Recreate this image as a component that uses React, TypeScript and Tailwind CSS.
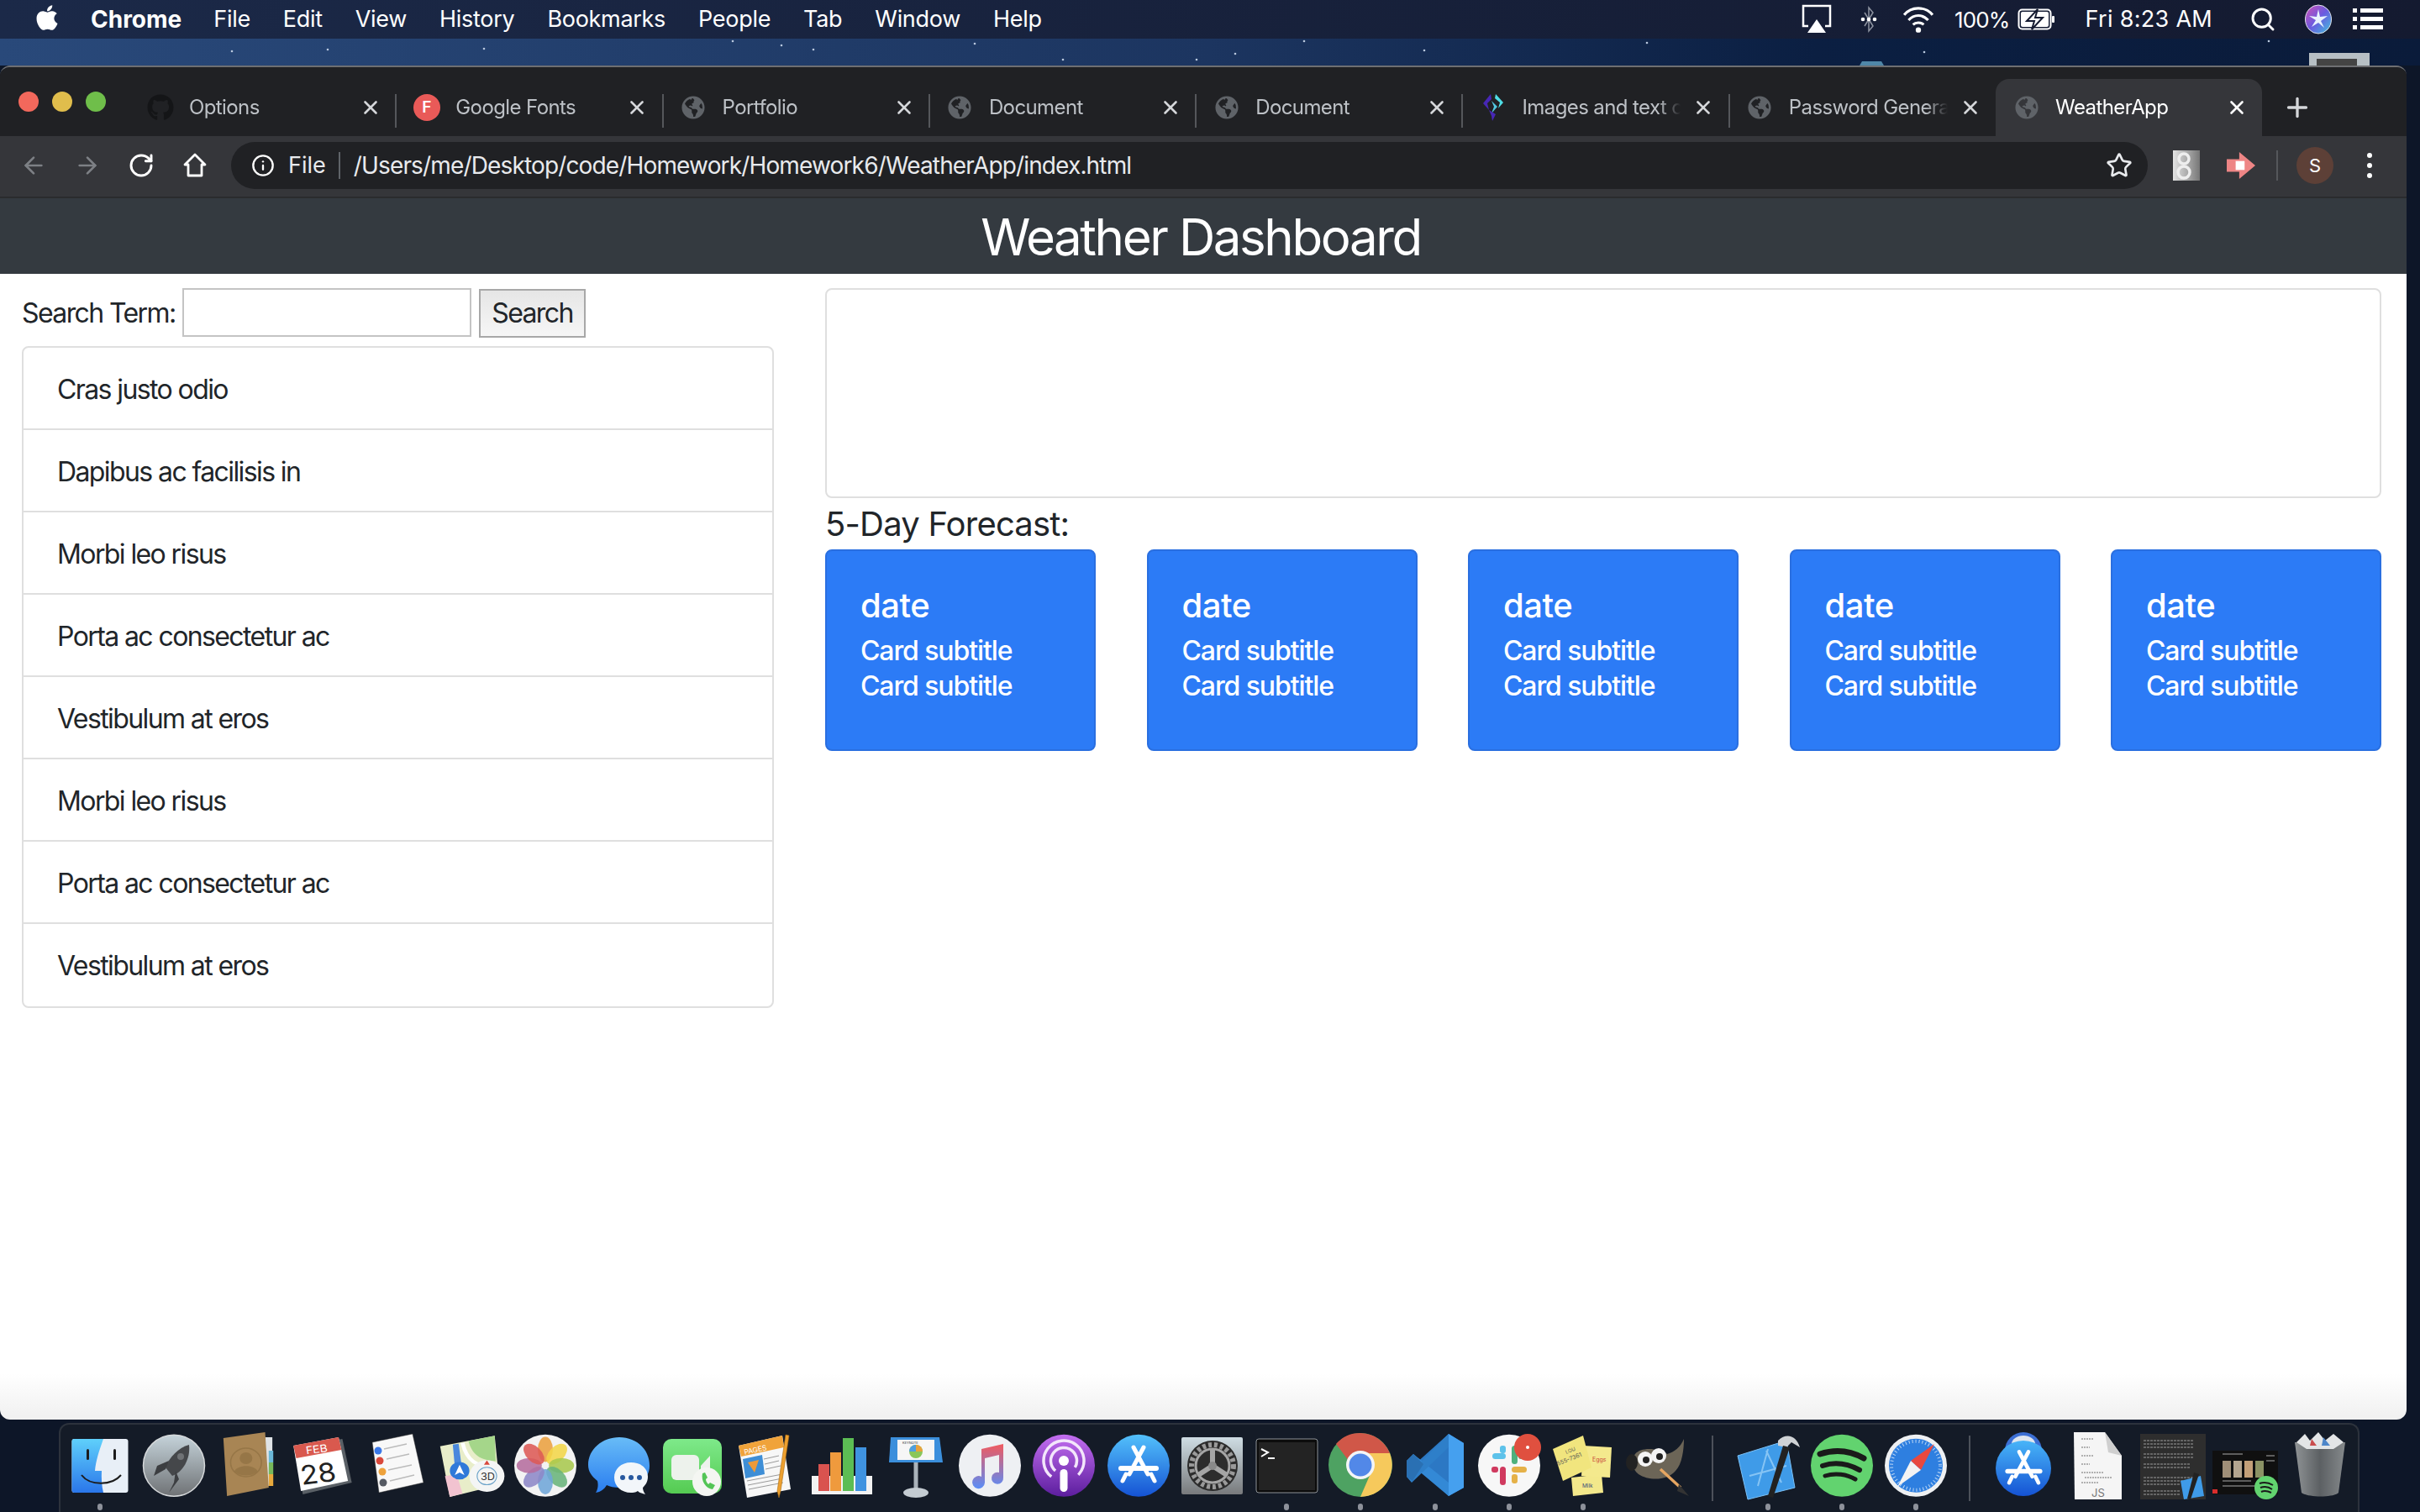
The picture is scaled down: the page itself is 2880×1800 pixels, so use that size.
import React from "react";
import { ArrowLeft, ArrowRight, RotateCw, Star, Info, Plus, X, Search as SearchIcon } from "lucide-react";
import { FaApple, FaGithub, FaGlobeAmericas } from "react-icons/fa";

const menu = ["File", "Edit", "View", "History", "Bookmarks", "People", "Tab", "Window", "Help"];
const items = ["Cras justo odio", "Dapibus ac facilisis in", "Morbi leo risus", "Porta ac consectetur ac", "Vestibulum at eros", "Morbi leo risus", "Porta ac consectetur ac", "Vestibulum at eros"];

function ImagesIcon() {
  return (
    <svg viewBox="0 0 32 32" className="w-[32px] h-[32px]">
      <path d="M13 0 L4 11 L11 19 L9 11 L14 6Z" fill="#4727b5" />
      <path d="M19 0 L28 10 L22 17 L24 10 L18 5Z" fill="#4fdde6" />
      <path d="M14 8 L21 15 L14 23 L17 15 Z" fill="#52c9e0" />
      <path d="M11 19 L19 24 L15 32 L14 26 Z" fill="#4727b5" />
    </svg>
  );
}

function Fav({ kind }: { kind: string }) {
  if (kind === "gh") return <FaGithub className="w-[32px] h-[32px] text-[#141517]" />;
  if (kind === "f")
    return (
      <div className="w-[32px] h-[32px] rounded-full bg-[#e95a58] flex items-center justify-center text-white text-[19px] font-semibold font-['Inter',sans-serif]">F</div>
    );
  if (kind === "img") return <ImagesIcon />;
  return <FaGlobeAmericas className="w-[28px] h-[28px] text-[#5f6368]" />;
}

const tabs = [
  { t: "Options", k: "gh" },
  { t: "Google Fonts", k: "f" },
  { t: "Portfolio", k: "g" },
  { t: "Document", k: "g" },
  { t: "Document", k: "g" },
  { t: "Images and text on top of", k: "img" },
  { t: "Password Generator", k: "g" },
  { t: "WeatherApp", k: "g", active: true },
];

function Tab({ t, k, active, sep }: { t: string; k: string; active?: boolean; sep: boolean }) {
  return (
    <div className={`relative w-[317.3px] h-[68px] flex items-center ${active ? "bg-[#35363a] rounded-t-[16px]" : ""}`}>
      <div className="w-[71px] flex justify-center shrink-0 pl-[6px]">
        <div className="w-[32px] flex justify-center ml-[-4px]"><Fav kind={k} /></div>
      </div>
      <div className={`w-[189px] overflow-hidden whitespace-nowrap text-[24px] leading-[30px] tracking-[-0.6px] [mask-image:linear-gradient(to_right,black_86%,transparent_100%)] ${active ? "text-white" : "text-[#bdc1c6]"}`}>{t}</div>
      <X className={`ml-[14px] w-[26px] h-[26px] ${active ? "text-white" : "text-[#d5d7da]"}`} strokeWidth={2.4} />
      {sep && <div className="absolute right-[-1px] top-[18px] h-[40px] w-[2px] bg-[#55575b]" />}
    </div>
  );
}

/* ---- dock icons ---- */
const S = ({ children }: { children: React.ReactNode }) => (
  <svg viewBox="0 0 88 84" className="w-[88px] h-[84px]">{children}</svg>
);

const Finder = () => (
  <S>
    <defs>
      <linearGradient id="fb" x1="0" y1="0" x2="0" y2="1"><stop offset="0" stopColor="#5fd0fb" /><stop offset="1" stopColor="#2a76ea" /></linearGradient>
    </defs>
    <rect x="10.5" y="10" width="67" height="64" rx="3" fill="#e8eff7" />
    <path d="M13.5 10 H48 C43 24 39 36 38 48 H46 C45.500 56 46 66 48 74 H13.500 A3 3 0 0 1 10.500 71 V13 A3 3 0 0 1 13.500 10Z" fill="url(#fb)" />
    <rect x="28" y="22" width="3" height="13" rx="1.5" fill="#1c1c1c" />
    <rect x="60" y="22" width="3" height="13" rx="1.5" fill="#1c1c1c" />
    <path d="M22 53 C32 66 58 66 69 53" fill="none" stroke="#1c1c1c" strokeWidth="2" />
  </S>
);
const Rocket = () => (
  <S>
    <defs><linearGradient id="rk" x1="0" y1="0" x2="0" y2="1"><stop offset="0" stopColor="#c5d3da" /><stop offset="1" stopColor="#6f7275" /></linearGradient></defs>
    <circle cx="44" cy="41.7" r="36.5" fill="url(#rk)" stroke="#d6d9db" strokeWidth="1.5" />
    <path d="M62 17 C50 20 38 32 34 44 L42 54 C54 50 64 34 62 17Z" fill="#45474a" />
    <path d="M36 40 L22 46 L18 58 L32 50Z M44 52 L42 66 L36 78 L48 62Z" fill="#3c3e41" transform="translate(2,-4)" />
    <circle cx="52" cy="31" r="4" fill="#6f7275" />
  </S>
);
const Contacts = () => (
  <S>
    <g transform="translate(3 0) scale(1.08 1)">
      <rect x="56" y="8" width="8" height="58" fill="#dfe3e6" />
      <rect x="60" y="24" width="5" height="14" fill="#6bb8d8" /><rect x="60" y="38" width="5" height="14" fill="#77b85a" /><rect x="60" y="52" width="5" height="14" fill="#e8a93c" />
      <path d="M10 9 L56 2 L60 68 L14 78Z" fill="#a88554" />
      <circle cx="35" cy="38" r="17" fill="none" stroke="#967647" strokeWidth="1.5" />
      <circle cx="35" cy="33" r="7" fill="#967647" /><path d="M22 49 C25 40 45 40 48 49 C41 55 29 55 22 49Z" fill="#967647" />
    </g>
  </S>
);
const Calendar = () => (
  <S>
    <g transform="translate(-2 0) scale(1.12 1)">
      <path d="M12 20 L62 10 L72 62 L20 76Z" fill="#5a6066" />
      <path d="M10 18 L58 8 L68 60 L18 72Z" fill="#fff" />
      <path d="M10 18 L58 8 L61 23 L13 33Z" fill="#d9594e" />
      <text x="23" y="27" fontSize="12.5" fill="#fff" fontFamily="Inter, sans-serif" transform="rotate(-8 33 22)">FEB</text>
      <text x="17" y="62" fontSize="31" fill="#222" fontFamily="Inter, sans-serif" transform="rotate(-8 38 50)">28</text>
    </g>
  </S>
);
const Reminders = () => (
  <S>
    <path d="M15 14 L63 4 L76 62 L23 74Z" fill="#f8f8f8" stroke="#2a2a2a" strokeWidth="0.5" />
    <circle cx="22" cy="24" r="4.5" fill="#3b78e7" /><circle cx="24" cy="36" r="4.5" fill="#d9483b" /><circle cx="27" cy="49" r="4.5" fill="#eea23c" /><circle cx="28" cy="62" r="4.5" fill="#555a63" />
    <path d="M29 22 L56 16 M32 34 L59 28 M34 47 L62 41 M36 60 L65 53" stroke="#bbb" strokeWidth="1.3" />
  </S>
);
const Maps = () => (
  <S>
    <g transform="translate(-5 -2) scale(1.16 1.04)">
      <path d="M11 20 L67 8 L72 64 L21 78Z" fill="#e8edc9" />
      <path d="M40 14 C44 30 52 36 68 37 L67 8Z" fill="#a5d68a" />
      <path d="M24 18 L30 17 L34 50 L27 54Z" fill="#4a88dd" />
      <path d="M16 54 L28 52 L34 74 L21 78Z" fill="#f2c3d0" />
      <path d="M34 16 C38 36 48 44 70 45" fill="none" stroke="#fff" strokeWidth="4" />
      <circle cx="31" cy="48" r="10" fill="#2f79d9" /><path d="M31 41 L36 53 L31 50 L26 53Z" fill="#fff" />
      <circle cx="59" cy="54" r="18" fill="#f4f5f5" /><circle cx="59" cy="54" r="10" fill="none" stroke="#6aa2c9" strokeWidth="1" />
      <text x="52.5" y="58.5" fontSize="11" fill="#333" fontFamily="Inter, sans-serif">3D</text>
      <path d="M59 36 L62 41 H56Z" fill="#d9483b" />
    </g>
  </S>
);
const Photos = () => {
  const cs = ["#eba140", "#f3d649", "#a8c84f", "#69b47b", "#6fa6d8", "#8d88c7", "#b56d9e", "#dd5a55"];
  return (
    <S>
      <circle cx="44" cy="41.7" r="37" fill="#f3f3f3" />
      {cs.map((c, i) => (
        <ellipse key={c} cx="44" cy="22.5" rx="9" ry="15" fill={c} fillOpacity="0.88" transform={`rotate(${i * 45} 44 41.7)`} />
      ))}
    </S>
  );
};
const Messages = () => (
  <S>
    <defs><linearGradient id="ms" x1="0" y1="0" x2="0" y2="1"><stop offset="0" stopColor="#68bcf7" /><stop offset="1" stopColor="#2a7df0" /></linearGradient></defs>
    <path d="M44 8 C64 8 80 22 80 42 C80 60 62 68 44 68 C38 68 33 67 29 65 C26 70 22 73 16 74 C19 69 19 64 18 60 C11 54 7 49 7 41 C7 22 24 8 44 8Z" fill="url(#ms)" />
    <path d="M58 38 C70 38 78 45 78 55 C78 62 74 66 72 68 C72 71 73 73 75 76 C71 75 68 74 66 72 C63 74 60 74 58 74 C46 74 38 66 38 56 C38 46 46 38 58 38Z" fill="#f2f6fa" />
    <circle cx="48" cy="56" r="3" fill="#27589f" /><circle cx="58" cy="56" r="3" fill="#27589f" /><circle cx="68" cy="56" r="3" fill="#27589f" />
  </S>
);
const FaceTime = () => (
  <S>
    <defs><linearGradient id="ft" x1="0" y1="0" x2="0" y2="1"><stop offset="0" stopColor="#7ee98a" /><stop offset="1" stopColor="#55cb52" /></linearGradient></defs>
    <rect x="8" y="10" width="70" height="65" rx="10" fill="url(#ft)" />
    <rect x="18" y="29" width="33" height="30" rx="6" fill="#edf2ec" />
    <path d="M53 42 L64 30 V57 L53 50Z" fill="#edf2ec" />
    <circle cx="60" cy="61" r="17" fill="#f4f6f2" />
    <path d="M55 51 C53 60 59 69 67 70 L70 65 L64 62 L62 64 C60 62 59 60 59 58 L61 56 L58 50Z" fill="#53c556" />
  </S>
);
const Pages = () => (
  <S>
    <path d="M10 18 L62 6 L72 70 L20 80Z" fill="#f7f7f7" />
    <path d="M10 18 L62 6 L64 20 L13 31Z" fill="#f0a33a" />
    <text x="16" y="26" fontSize="8.5" fill="#fff" fontFamily="Inter, sans-serif" transform="rotate(-12 30 22)">PAGES</text>
    <path d="M15 34 L38 29 L41 52 L18 57Z" fill="#3e8ed6" />
    <path d="M21 38 L34 35 L29 50Z" fill="#ee9a3a" />
    <path d="M40 34 L58 30 M41 40 L58 36 M42 46 L60 42 M20 60 L62 52 M21 65 L62 57 M22 70 L63 62" stroke="#9a9a9a" strokeWidth="1" />
    <path d="M66 5 L70 6 L60 72 L58 80 L56 72Z" fill="#eda02f" stroke="#a76c14" strokeWidth="0.6" />
  </S>
);
const Numbers = () => (
  <S>
    <path d="M8 54 H80 V76 H8Z" fill="#f2f2f2" />
    <rect x="16" y="40" width="13" height="32" fill="#d9534f" />
    <rect x="30" y="26" width="13" height="46" fill="#ef9a3d" />
    <rect x="45" y="9" width="13" height="63" fill="#5cbd54" />
    <rect x="60" y="20" width="13" height="52" fill="#3f93e0" />
  </S>
);
const Keynote = () => (
  <S>
    <path d="M14 8 H72 L76 38 H12Z" fill="#3b8fdc" />
    <rect x="22" y="11" width="44" height="24" fill="#f6f6f6" />
    <circle cx="44" cy="25" r="8" fill="#8ac65a" /><path d="M44 25 V17 A8 8 0 0 1 52 25Z" fill="#e9a23b" /><path d="M44 25 H36 A8 8 0 0 1 44 17Z" fill="#4f9fe0" />
    <text x="28" y="15.5" fontSize="4" fill="#333" fontFamily="Inter, sans-serif">KEYNOTE</text>
    <rect x="41.5" y="38" width="5" height="33" fill="#a9b2ba" />
    <ellipse cx="44" cy="74" rx="15" ry="6" fill="#c4ccd2" />
  </S>
);
const Music = () => (
  <S>
    <defs><linearGradient id="mu" x1="0" y1="0" x2="0" y2="1"><stop offset="0" stopColor="#f15a5e" /><stop offset="1" stopColor="#5a8df7" /></linearGradient></defs>
    <circle cx="44" cy="41.7" r="37" fill="#eef0f3" />
    <path d="M34 22 L60 16 V56 A7 7 0 1 1 55 50 V29 L38 33 V62 A7.5 7.5 0 1 1 34 55Z" fill="url(#mu)" />
  </S>
);
const Podcasts = () => (
  <S>
    <defs><linearGradient id="pd" x1="0" y1="0" x2="0" y2="1"><stop offset="0" stopColor="#c36ef0" /><stop offset="1" stopColor="#5c1e9e" /></linearGradient></defs>
    <circle cx="44" cy="41.7" r="37" fill="url(#pd)" />
    <circle cx="44" cy="36" r="24" fill="none" stroke="#f3e6fb" strokeWidth="3.5" strokeDasharray="115 36" transform="rotate(128 44 36)" />
    <circle cx="44" cy="36" r="15.5" fill="none" stroke="#f3e6fb" strokeWidth="3.5" strokeDasharray="70 28" transform="rotate(130 44 36)" />
    <circle cx="44" cy="36" r="6" fill="#fff" />
    <rect x="39.5" y="46" width="9" height="27" rx="4.5" fill="#fff" />
  </S>
);
const AppStoreGlyph = () => (
  <g stroke="#fff" strokeLinecap="round" fill="none">
    <path d="M50 20 L33 52 M38 20 L55 52" strokeWidth="5" />
    <path d="M23 45 H65" strokeWidth="6" />
    <path d="M29 52 L25 60 M59 52 L63 60" strokeWidth="5" />
  </g>
);
const AppStore = () => (
  <S>
    <defs><linearGradient id="as" x1="0" y1="0" x2="0" y2="1"><stop offset="0" stopColor="#53c1fb" /><stop offset="1" stopColor="#1553d4" /></linearGradient></defs>
    <circle cx="44" cy="41.7" r="37" fill="url(#as)" />
    <AppStoreGlyph />
  </S>
);
const SysPrefs = () => (
  <S>
    <defs><linearGradient id="sp" x1="0" y1="0" x2="0" y2="1"><stop offset="0" stopColor="#cfdde4" /><stop offset="1" stopColor="#787a7c" /></linearGradient></defs>
    <rect x="7" y="8" width="73" height="68" rx="2" fill="url(#sp)" />
    <circle cx="44" cy="42" r="30" fill="#2c2c2c" />
    <circle cx="44" cy="42" r="25" fill="none" stroke="#9a9a9a" strokeWidth="6" strokeDasharray="4 3" />
    <circle cx="44" cy="42" r="20" fill="none" stroke="#a5a5a5" strokeWidth="3" />
    <path d="M44 42 V22 M44 42 L27 53 M44 42 L61 53" stroke="#a5a5a5" strokeWidth="6" />
    <circle cx="44" cy="42" r="5" fill="#8a8a8a" />
  </S>
);
const Terminal = () => (
  <S>
    <rect x="8" y="10" width="73" height="64" rx="3" fill="#0c0c0c" stroke="#8e9398" strokeWidth="1" />
    <rect x="11" y="14" width="67" height="57" fill="#232323" />
    <path d="M14 22 L22 26 L14 31" fill="none" stroke="#fff" strokeWidth="2" />
    <path d="M22 33 H30" stroke="#fff" strokeWidth="2" />
  </S>
);
const ChromeIcon = () => (
  <S>
    <circle cx="44" cy="41" r="38" fill="#4ea262" />
    <path d="M44 3 A38 38 0 0 1 79 27 H44 A15 15 0 0 0 30 36 L15 16 A38 38 0 0 1 44 3Z" fill="#d05748" />
    <path d="M79 27 A38 38 0 0 1 44 79 L57 49 A15 15 0 0 0 57 33Z M44 27 H79 L57 38Z" fill="#f6c95c" />
    <circle cx="44" cy="41" r="17" fill="#f4f5f6" />
    <circle cx="44" cy="41" r="13.5" fill="#5288e8" />
  </S>
);
const VSCode = () => (
  <S>
    <path d="M60 4 L78 15 V68 L60 78 L20 40Z" fill="#2c78c4" />
    <path d="M60 4 L78 15 V68 L60 78Z" fill="#45a0ef" />
    <path d="M18 28 L60 62 V78 L10 36Z" fill="#3389d6" />
    <path d="M60 4 V20 L16 62 L10 55Z" fill="#2e7fc9" />
    <path d="M10 36 L18 28 L30 40 L17 60 L10 55Z" fill="#2a70b3" />
  </S>
);
const Slack = () => (
  <S>
    <circle cx="44" cy="41.7" r="37" fill="#f7f7f7" />
    <rect x="24" y="27" width="16" height="7" rx="3.5" fill="#5dc2ea" /><rect x="33" y="18" width="7" height="9" rx="3" fill="#5dc2ea" />
    <rect x="47" y="18" width="7" height="22" rx="3.5" fill="#4eb17d" /><rect x="55" y="27" width="9" height="7" rx="3" fill="#4eb17d" />
    <rect x="47" y="43" width="18" height="7" rx="3.5" fill="#e5b148" /><rect x="47" y="52" width="7" height="11" rx="3" fill="#e5b148" />
    <rect x="33" y="43" width="7" height="22" rx="3.5" fill="#d03a5f" /><rect x="23" y="43" width="8" height="7" rx="3" fill="#d03a5f" />
    <circle cx="66" cy="20" r="16" fill="#e0503f" />
    <circle cx="66" cy="20" r="2" fill="#fff" />
  </S>
);
const Stickies = () => (
  <S>
    <path d="M30 56 L66 52 L68 74 L32 78Z" fill="#f3e88b" />
    <path d="M44 18 L78 20 L76 56 L42 54Z" fill="#f4e98d" />
    <path d="M8 22 L44 6 L54 44 L20 60Z" fill="#f1e57e" />
    <text x="24" y="28" fontSize="6" fill="#555" fontFamily="Inter, sans-serif" transform="rotate(-22 24 28)">LOU</text>
    <text x="14" y="42" fontSize="7" fill="#555" fontFamily="Inter, sans-serif" transform="rotate(-22 14 42)">555-7361</text>
    <text x="55" y="37" fontSize="7" fill="#c9473a" fontFamily="Inter, sans-serif">Eggs</text>
    <text x="43" y="68" fontSize="6.5" fill="#3a4d7a" fontFamily="Inter, sans-serif">Milk</text>
  </S>
);
const Gimp = () => (
  <S>
    <path d="M76 10 C76 22 74 40 66 48 C56 60 34 60 22 52 C14 46 12 34 18 28 C24 20 44 20 56 28 C64 26 72 20 76 10Z" fill="#6c6557" />
    <ellipse cx="14" cy="38" rx="7" ry="10" fill="#222" />
    <circle cx="30" cy="34" r="9" fill="#f4f4f4" /><circle cx="46" cy="30" r="9" fill="#f4f4f4" />
    <circle cx="31" cy="35" r="4" fill="#222" /><circle cx="47" cy="31" r="4" fill="#222" />
    <path d="M48 46 L72 68" stroke="#e6a662" strokeWidth="3.500" /><path d="M70 64 L82 78 L68 72Z" fill="#333" />
  </S>
);
const Xcode = () => (
  <S>
    <path d="M8 30 L66 12 L76 68 L20 82Z" fill="#3f9be8" stroke="#7cc1f6" strokeWidth="1" />
    <g stroke="#86c4f4" strokeWidth="2" fill="none">
      <path d="M44 22 L32 66 M42 24 L60 62 M22 54 L66 42" />
    </g>
    <path d="M56 12 C66 2 78 6 82 20 L72 14 L66 20 L56 18Z" fill="#cfd2d5" />
    <path d="M62 18 L70 20 L50 80 L44 78Z" fill="#222" />
  </S>
);
const Spotify = () => (
  <S>
    <circle cx="44" cy="41.7" r="37" fill="#62d36f" />
    <path d="M18 28 C36 22 54 24 70 33" stroke="#1a1a1a" strokeWidth="7" fill="none" strokeLinecap="round" />
    <path d="M21 42 C36 37 52 40 65 47" stroke="#1a1a1a" strokeWidth="6" fill="none" strokeLinecap="round" />
    <path d="M24 54 C36 50 50 52 60 58" stroke="#1a1a1a" strokeWidth="5" fill="none" strokeLinecap="round" />
  </S>
);
const Safari = () => (
  <S>
    <circle cx="44" cy="41.7" r="37" fill="#eef0f2" />
    <circle cx="44" cy="41.7" r="32" fill="#2e7fe0" />
    <circle cx="44" cy="41.7" r="29" fill="none" stroke="#bcd7f5" strokeWidth="4" strokeDasharray="1 3" />
    <path d="M66 16 L38 36 L50 47Z" fill="#e8483f" />
    <path d="M22 67 L38 36 L50 47Z" fill="#f3f3f3" />
  </S>
);
const Downloads = () => (
  <S>
    <circle cx="44" cy="24" r="22" fill="#3c6fd4" />
    <ellipse cx="44" cy="16" rx="14" ry="10" fill="#dfe6ef" />
    <defs><linearGradient id="as2" x1="0" y1="0" x2="0" y2="1"><stop offset="0" stopColor="#48b5f8" /><stop offset="1" stopColor="#1553d4" /></linearGradient></defs>
    <circle cx="44" cy="45" r="33" fill="url(#as2)" />
    <g transform="translate(4 7) scale(0.92)"><AppStoreGlyph /></g>
  </S>
);
const JsDoc = () => (
  <S>
    <path d="M15 2 H52 L72 30 V82 H16Z" fill="#f5f5f5" />
    <path d="M52 2 L72 30 L56 26Z" fill="#cfcfcf" />
    <path d="M24 10 H38 M24 20 H34 M24 30 H38 M24 40 H34 M24 50 H50 M28 56 H60 M24 62 H44" stroke="#9a9a9a" strokeWidth="1.6" strokeDasharray="2 1" />
    <text x="36" y="79" fontSize="13" fill="#777" fontFamily="Inter, sans-serif">JS</text>
  </S>
);
const DocThumb = () => (
  <S>
    <rect x="6" y="4" width="78" height="78" fill="#2e2e2e" />
    <g stroke="#9b9b9b" strokeWidth="1.2" strokeDasharray="3 1">
      <path d="M10 12 H70 M10 16 H70 M10 20 H70 M10 28 H70 M10 32 H70 M10 40 H66 M10 44 H66 M10 56 H70 M10 60 H70 M10 64 H54 M10 72 H54 M10 76 H54" />
    </g>
    <path d="M54 60 L78 54 L82 78 L58 82Z" fill="#3f9be8" />
    <path d="M70 50 L76 52 L66 82 L62 81Z" fill="#222" />
  </S>
);
const WinThumb = () => (
  <S>
    <rect x="4" y="24" width="78" height="52" fill="#101010" />
    <rect x="16" y="36" width="10" height="20" fill="#a08f78" /><rect x="29" y="36" width="10" height="20" fill="#b4a58f" /><rect x="42" y="36" width="10" height="20" fill="#c39f78" /><rect x="55" y="36" width="10" height="20" fill="#8b9264" />
    <path d="M16 28 H40 M16 60 H50 M16 66 H66 M68 30 H78 M68 36 H78" stroke="#777" strokeWidth="1.5" />
    <rect x="4" y="70" width="6" height="5" fill="#d92d2d" />
    <circle cx="68" cy="68" r="14" fill="#62d36f" />
    <path d="M60 63 C66 61 71 62 76 65 M61 68 C66 66 71 67 75 70 M62 73 C66 71 70 72 74 74" stroke="#1a1a1a" strokeWidth="2" fill="none" />
  </S>
);
const Trash = () => (
  <S>
    <defs><linearGradient id="tr" x1="0" y1="0" x2="1" y2="0"><stop offset="0" stopColor="#8f9395" /><stop offset="0.5" stopColor="#5c6063" /><stop offset="1" stopColor="#85898b" /></linearGradient></defs>
    <path d="M14 14 H74 L66 74 C60 80 30 80 22 74Z" fill="url(#tr)" />
    <path d="M16 14 L26 4 L32 12 L42 2 L50 12 L60 4 L72 14 L60 22 H28Z" fill="#e3e5e6" />
    <path d="M34 10 L40 18 L32 18Z" fill="#c94d4d" /><path d="M48 8 L56 18 L46 18Z" fill="#4d86c9" />
  </S>
);

const leftApps: [React.FC, boolean][] = [
  [Finder, true], [Rocket, false], [Contacts, false], [Calendar, false], [Reminders, false], [Maps, false], [Photos, false], [Messages, false], [FaceTime, false], [Pages, false], [Numbers, false], [Keynote, false], [Music, false], [Podcasts, false], [AppStore, false], [SysPrefs, false], [Terminal, true], [ChromeIcon, true], [VSCode, true], [Slack, true], [Stickies, true], [Gimp, false],
];
const midApps: [React.FC, boolean][] = [[Xcode, true], [Spotify, true], [Safari, true]];
const rightApps: [React.FC, boolean][] = [[Downloads, false], [JsDoc, false], [DocThumb, false], [WinThumb, false], [Trash, false]];

function DockItem({ Icon, dot }: { Icon: React.FC; dot: boolean }) {
  return (
    <div className="w-[88.25px] shrink-0 flex flex-col items-center">
      <Icon />
      <div className={`w-[6px] h-[8px] mt-[3px] rounded-full ${dot ? "bg-[#8d919a]" : ""}`} />
    </div>
  );
}

export default function App() {
  return (
    <div className="w-[2880px] h-[1800px] overflow-hidden flex flex-col bg-[#0d1628] font-['Inter',sans-serif]">
      {/* menu bar */}
      <div className="h-[46px] shrink-0 flex items-center justify-between bg-[linear-gradient(to_right,#1b2948,#141a30)] text-white text-[27px] pl-[41px]">
        <div className="flex items-center">
          <FaApple className="w-[30px] h-[34px] mb-[4px]" />
          <span className="ml-[37px] text-[28px] font-bold">Chrome</span>
          <div className="flex items-center gap-[39px] ml-[38px] tracking-[-0.3px]">
            {menu.map((m) => <span key={m}>{m}</span>)}
          </div>
        </div>
        <div className="flex items-center pr-[44px]">
          <svg viewBox="0 0 36 36" className="w-[36px] h-[36px] fill-none">
            <path d="M8 26 H2 V2 H34 V26 H28" stroke="#fff" strokeWidth="2.500" />
            <path d="M18 18 L29 34 H7Z" fill="#fff" />
          </svg>
          <svg viewBox="0 0 24 36" className="w-[24px] h-[36px] ml-[32px] fill-none">
            <path d="M7 10 L17 26 L12 32 V4 L17 10 L7 26" stroke="#8d93a0" strokeWidth="1.500" />
            <circle cx="5" cy="18" r="2.300" fill="#fff" /><circle cx="12" cy="18" r="2.300" fill="#fff" /><circle cx="19" cy="18" r="2.300" fill="#fff" />
          </svg>
          <svg viewBox="0 0 36 32" className="w-[38px] h-[34px] ml-[28px] fill-none">
            <path d="M2 11 C10 1 26 1 34 11 M7 17 C13 10 23 10 29 17 M12 22 C15 19 21 19 24 22" stroke="#fff" strokeWidth="3" />
            <circle cx="18" cy="28" r="3" fill="#fff" />
          </svg>
          <span className="text-[26px] ml-[24px] tracking-[-0.8px]">100%</span>
          <svg viewBox="0 0 46 26" className="w-[46px] h-[26px] ml-[9px] fill-none">
            <rect x="1.500" y="1.500" width="38" height="23" rx="4" stroke="#fff" strokeWidth="2" />
            <rect x="4" y="4" width="33" height="18" rx="2" fill="#fff" />
            <path d="M24 1 L11 15 H20 L17 25 L30 11 H21Z" fill="#fff" stroke="#141a30" strokeWidth="2" />
            <rect x="41" y="9" width="3" height="8" rx="1" fill="#fff" />
          </svg>
          <span className="ml-[35px] tracking-[0.3px]">Fri 8:23 AM</span>
          <SearchIcon className="ml-[44px] w-[32px] h-[32px] text-white" strokeWidth={2.200} />
          <svg viewBox="0 0 32 36" className="w-[32px] h-[36px] ml-[34px]">
            <defs><linearGradient id="siri" x1="0" y1="0" x2="1" y2="1"><stop offset="0" stopColor="#d24fb5" /><stop offset="0.5" stopColor="#6a5be0" /><stop offset="1" stopColor="#3fc6de" /></linearGradient></defs>
            <ellipse cx="16" cy="18" rx="15.500" ry="17" fill="url(#siri)" stroke="#dfe4ea" />
            <path d="M16 6 L18 15 L27 14 L19 20 L23 28 L16 22 L8 27 L13 19 L5 14 L14 15Z" fill="#e9f3ff" />
          </svg>
          <svg viewBox="0 0 36 30" className="w-[36px] h-[30px] ml-[25px]">
            <rect x="0" y="2" width="5" height="5" fill="#fff" /><rect x="9" y="2" width="27" height="5" fill="#fff" />
            <rect x="0" y="12" width="5" height="5" fill="#fff" /><rect x="9" y="12" width="27" height="5" fill="#fff" />
            <rect x="0" y="22" width="5" height="5" fill="#fff" /><rect x="9" y="22" width="27" height="5" fill="#fff" />
          </svg>
        </div>
      </div>

      {/* wallpaper strip */}
      <div className="h-[32px] shrink-0 bg-[linear-gradient(to_right,#29497a,#1c3560_50%,#0b1f42_75%,#0a1b3a)]">
        <svg viewBox="0 0 2880 32" className="w-[2880px] h-[32px]">
          {[[276,15],[390,13],[576,12],[872,3],[930,8],[968,13],[1160,6],[1265,25],[1424,25],[1552,3],[1470,18],[1695,14],[1960,5],[2290,16],[2700,3]].map(([x, y]) => (
            <circle key={x} cx={x} cy={y} r="1.300" fill="#b9c8de" />
          ))}
          <path d="M2213 32 L2216 27 H2239 L2242 32Z" fill="#4f87a8" />
          <rect x="2748" y="17" width="72" height="15" fill="#b7bfc4" />
          <rect x="2757" y="24" width="48" height="8" fill="#444" />
        </svg>
      </div>

      {/* window */}
      <div className="h-[1612px] shrink-0 w-[2864px] flex flex-col rounded-t-[12px] rounded-b-[12px] overflow-hidden border-t-[2px] border-[#6e6f72]">
        <div className="h-[82px] shrink-0 bg-[#202124] flex items-end">
          <div className="w-[154px] h-full flex items-center gap-[16px] pl-[22px]">
            <div className="w-[24px] h-[24px] rounded-full bg-[#f2685c]" />
            <div className="w-[24px] h-[24px] rounded-full bg-[#e0bd4c]" />
            <div className="w-[24px] h-[24px] rounded-full bg-[#6fbe4a]" />
          </div>
          {tabs.map((t, i) => <Tab key={i} t={t.t} k={t.k} active={t.active} sep={i < 6} />)}
          <Plus className="ml-[24px] mb-[16px] w-[36px] h-[36px] text-[#d5d7da]" strokeWidth={2.200} />
        </div>
        <div className="h-[74px] shrink-0 bg-[#35363a] border-b-[2px] border-[#2a2b2e] flex items-center pl-[24px] pb-[2px]">
          <ArrowLeft className="w-[32px] h-[32px] text-[#7d8085]" strokeWidth={2} />
          <ArrowRight className="w-[32px] h-[32px] ml-[32px] text-[#7d8085]" strokeWidth={2} />
          <RotateCw className="w-[32px] h-[32px] ml-[32px] text-white" strokeWidth={2.200} />
          <svg viewBox="0 0 32 32" className="w-[32px] h-[32px] ml-[32px] fill-none">
            <path d="M16 3 L28 15 H24 V28 H8 V15 H4Z" stroke="#fff" strokeWidth="2.800" strokeLinejoin="round" />
          </svg>
          <div className="ml-[27px] w-[2281px] h-[56px] rounded-full bg-[#202124] flex items-center pl-[24px] text-white">
            <Info className="w-[28px] h-[28px]" strokeWidth={2} />
            <span className="ml-[16px] text-[27px] text-[#e8eaed]">File</span>
            <div className="ml-[15px] w-[2px] h-[32px] bg-[#5f6368]" />
            <span className="ml-[16px] text-[28px] tracking-[-0.85px] text-[#e8eaed]">/Users/me/Desktop/code/Homework/Homework6/WeatherApp/index.html</span>
            <Star className="ml-auto mr-[18px] w-[32px] h-[32px] text-[#e8eaed]" strokeWidth={2} />
          </div>
          <svg viewBox="0 0 32 36" className="w-[32px] h-[36px] ml-[30px]">
            <defs><linearGradient id="ext" x1="0" y1="0" x2="1" y2="0"><stop offset="0" stopColor="#e4e4e4" /><stop offset="1" stopColor="#777" /></linearGradient></defs>
            <rect width="32" height="36" fill="url(#ext)" />
            <circle cx="13" cy="10" r="6" fill="none" stroke="#eee" strokeWidth="3.500" />
            <circle cx="13" cy="26" r="7" fill="none" stroke="#eee" strokeWidth="3.500" />
          </svg>
          <svg viewBox="0 0 32 32" className="w-[34px] h-[34px] ml-[32px]">
            <path d="M0 9 H14 V1 L32 16 L14 31 V23 H0Z" fill="#ee8585" />
            <rect x="10" y="11" width="10" height="10" fill="#fff" />
          </svg>
          <div className="ml-[25px] w-[2px] h-[36px] bg-[#55575b]" />
          <div className="ml-[22px] w-[44px] h-[44px] rounded-full bg-[#5d4037] flex items-center justify-center text-white text-[22px]">S</div>
          <div className="ml-[40px] flex flex-col gap-[6px]">
            <div className="w-[6px] h-[6px] rounded-full bg-white" />
            <div className="w-[6px] h-[6px] rounded-full bg-white" />
            <div className="w-[6px] h-[6px] rounded-full bg-white" />
          </div>
        </div>
        <div className="h-[90px] shrink-0 bg-[#343a40] flex items-center justify-center pr-[6px] pt-[2px]">
          <h1 className="text-[60px] leading-[72px] text-white tracking-[-2.4px]">Weather Dashboard</h1>
        </div>
        <div className="flex-1 flex items-start bg-[linear-gradient(to_bottom,#fff_96%,#f0f0f0)] text-[32px] text-[#212529] pl-[26px] pr-[30px] pt-[17px] tracking-[-1.6px]">
          <div className="w-[895px] shrink-0">
            <div className="flex items-start h-[69px]">
              <label className="h-[58px] leading-[60px] w-[182px] whitespace-nowrap">Search Term:</label>
              <div className="ml-[9px] w-[344px] h-[58px] border-2 border-[#c4c4c4] bg-white" />
              <div className="ml-[9px] w-[127px] h-[58px] mt-[1px] border-2 border-[#a8a8a8] bg-[linear-gradient(to_bottom,#e6e6e6,#f6f6f6)] text-center leading-[54px]">Search</div>
            </div>
            <div className="border-2 border-[#dfdfdf] rounded-[8px] overflow-hidden">
              {items.map((s, i) => (
                <div key={i} className={`h-[96px] box-content px-[40px] pt-[2px] -mb-[2px] flex items-center ${i ? "border-t-2 border-[#dfdfdf]" : ""}`}>{s}</div>
              ))}
              <div className="h-[2px]" />
            </div>
          </div>
          <div className="ml-[61px] flex-1">
            <div className="h-[250px] border-2 border-[#dfdfdf] rounded-[8px]" />
            <div className="mt-[7px] h-[54px] text-[40px] leading-[48px] tracking-[-0.8px]">5-Day Forecast:</div>
            <div className="flex justify-between">
              {[0, 1, 2, 3, 4].map((i) => (
                <div key={i} className="w-[322px] h-[240px] rounded-[8px] border-2 border-[#2a6fe0] bg-[#2c7bf6] text-white pl-[40px] pt-[41px] font-medium">
                  <div className="text-[40px] leading-[48px] tracking-[-0.5px]">date</div>
                  <div className="mt-[11px] leading-[38px] tracking-[-1.1px]">Card subtitle</div>
                  <div className="mt-[4px] leading-[38px] tracking-[-1.1px]">Card subtitle</div>
                </div>
              ))}
            </div>
          </div>
        </div>
      </div>

      {/* dock */}
      <div className="ml-[70px] mt-[4px] w-[2738px] flex-1 bg-[#141b27] rounded-t-[12px] border-t-2 border-l-2 border-r-2 border-[#2c323c] flex pl-[3px] pt-[7px]">
        {leftApps.map(([I, d], i) => <DockItem key={i} Icon={I} dot={d} />)}
        <div className="w-[43px] shrink-0 flex justify-center"><div className="w-[2px] h-[78px] mt-[6px] bg-[#4c515a]" /></div>
        {midApps.map(([I, d], i) => <DockItem key={i} Icon={I} dot={d} />)}
        <div className="w-[40px] shrink-0 flex justify-center"><div className="w-[2px] h-[78px] mt-[6px] bg-[#4c515a]" /></div>
        {rightApps.map(([I, d], i) => <DockItem key={i} Icon={I} dot={d} />)}
      </div>
    </div>
  );
}
